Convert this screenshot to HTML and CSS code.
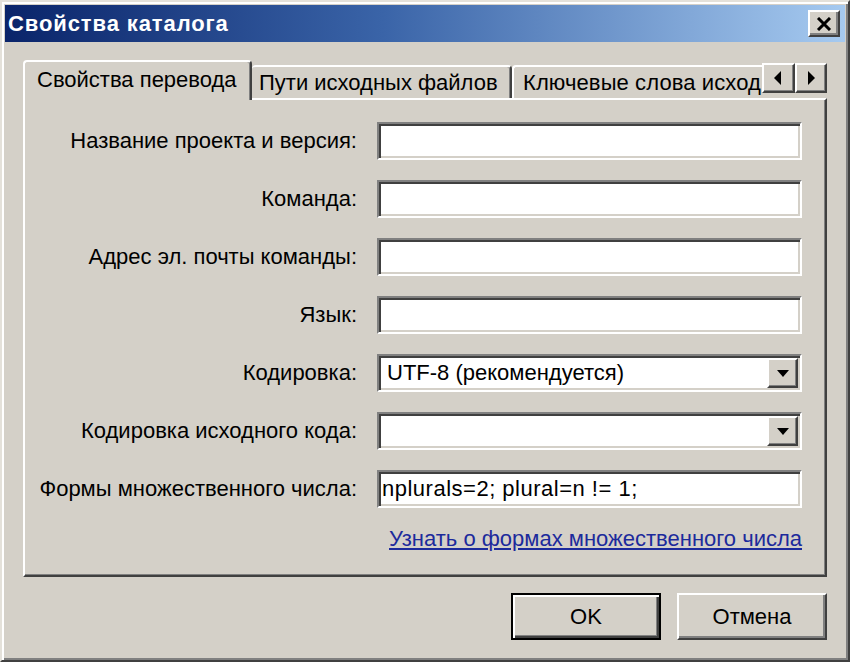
FILE: index.html
```html
<!DOCTYPE html>
<html lang="ru">
<head>
<meta charset="utf-8">
<title>Свойства каталога</title>
<link rel="stylesheet" href="styles.css">
</head>
<body>
<div class="window">
  <div class="titlebar">
    <span class="title">Свойства каталога</span>
    <button class="close-btn" aria-label="Закрыть">
      <svg width="16" height="14" viewBox="0 0 16 14"><path d="M2 1 L14 13 M14 1 L2 13" stroke="#000" stroke-width="3" fill="none"/></svg>
    </button>
  </div>
  <div class="content">
    <div class="tabs">
      <div class="tab tab-active">Свойства перевода</div>
      <div class="tab tab-second">Пути исходных файлов</div>
      <div class="tab tab-third"><span class="tab-clip">Ключевые слова исход</span></div>
      <div class="scroller">
        <button class="scroll-btn" aria-label="Влево"><svg width="8" height="14" viewBox="0 0 8 14"><polygon points="7,0 7,14 0,7" fill="#000"/></svg></button>
        <button class="scroll-btn" aria-label="Вправо"><svg width="8" height="14" viewBox="0 0 8 14"><polygon points="1,0 1,14 8,7" fill="#000"/></svg></button>
      </div>
    </div>
    <div class="panel">
      <div class="form">
        <label class="label">Название проекта и версия:</label>
        <div class="field"></div>
        <label class="label">Команда:</label>
        <div class="field"></div>
        <label class="label">Адрес эл. почты команды:</label>
        <div class="field"></div>
        <label class="label">Язык:</label>
        <div class="field"></div>
        <label class="label">Кодировка:</label>
        <div class="field combo"><span class="combo-text">UTF-8 (рекомендуется)</span><span class="drop-btn"><svg width="12" height="7" viewBox="0 0 12 7"><polygon points="0,0 12,0 6,7" fill="#000"/></svg></span></div>
        <label class="label">Кодировка исходного кода:</label>
        <div class="field combo"><span class="combo-text"></span><span class="drop-btn"><svg width="12" height="7" viewBox="0 0 12 7"><polygon points="0,0 12,0 6,7" fill="#000"/></svg></span></div>
        <label class="label">Формы множественного числа:</label>
        <div class="field text-field">nplurals=2; plural=n != 1;</div>
      </div>
      <div class="link-row"><a class="link" href="#">Узнать о формах множественного числа</a></div>
    </div>
    <div class="buttons">
      <button class="btn btn-default">OK</button>
      <button class="btn">Отмена</button>
    </div>
  </div>
</div>
</body>
</html>
```

FILE: styles.css
```css
html, body {
  margin: 0;
  padding: 0;
  background: #d4d0c8;
}

body {
  font-family: "Liberation Sans", Arial, sans-serif;
  font-size: 22px;
  color: #000;
}

.window {
  width: 850px;
  height: 662px;
  box-sizing: border-box;
  border: 2px solid;
  border-color: #e4e1da #404040 #404040 #e4e1da;
  box-shadow: inset 2px 2px 0 #ffffff, inset -2px -2px 0 #808080;
  padding: 3px;
  display: flex;
  flex-direction: column;
}

.titlebar {
  height: 37px;
  flex: none;
  background: linear-gradient(to right, #0a246a 0%, #3a64a8 45%, #a6caf0 100%);
  display: flex;
  align-items: center;
  justify-content: space-between;
  padding: 0 5px 0 3px;
}

.title {
  color: #fff;
  font-weight: bold;
  font-size: 22px;
  letter-spacing: 0.9px;
}

.close-btn {
  width: 32px;
  height: 27px;
  box-sizing: border-box;
  padding: 0;
  margin: 0;
  background: #d4d0c8;
  border: 2px solid;
  border-color: #ffffff #404040 #404040 #ffffff;
  box-shadow: inset -2px -2px 0 #808080;
  display: flex;
  align-items: center;
  justify-content: center;
}

.content {
  flex: 1;
  display: flex;
  flex-direction: column;
  padding: 18px 18px 0 18px;
}

.tabs {
  height: 38px;
  display: flex;
  align-items: flex-start;
  position: relative;
  z-index: 2;
}

.tab {
  box-sizing: border-box;
  white-space: nowrap;
  overflow: hidden;
  line-height: 24px;
  background: #d4d0c8;
  border-top: 2px solid #ffffff;
  border-left: 2px solid #ffffff;
  border-right: 2px solid #404040;
  border-radius: 4px 4px 0 0;
  box-shadow: inset -1px 0 0 #808080;
}

.tab-active {
  width: 229px;
  height: 40px;
  padding: 6px 0 0 12px;
}

.tab-second {
  width: 260px;
  height: 33px;
  margin-top: 5px;
  padding: 4px 0 0 7px;
  border-left: none;
}

.tab-third {
  flex: 1;
  min-width: 0;
  height: 33px;
  margin-top: 5px;
  padding: 4px 0 0 9px;
  border-right: none;
  border-radius: 4px 0 0 0;
  box-shadow: none;
}

.tab-clip {
  letter-spacing: 0.1px;
}

.scroller {
  width: 65px;
  height: 30px;
  margin-top: 3px;
  display: flex;
  flex: none;
}

.scroll-btn {
  flex: 1;
  height: 30px;
  box-sizing: border-box;
  padding: 0;
  margin: 0;
  background: #d4d0c8;
  border: 2px solid;
  border-color: #ffffff #404040 #404040 #ffffff;
  box-shadow: inset -1px -1px 0 #808080;
  display: flex;
  align-items: center;
  justify-content: center;
}

.panel {
  height: 479px;
  box-sizing: border-box;
  border: 2px solid;
  border-color: #ffffff #404040 #404040 #ffffff;
  box-shadow: inset -1px -1px 0 #808080;
  padding: 22px 23px 0 0;
  position: relative;
  z-index: 1;
}

.form {
  display: grid;
  grid-template-columns: 1fr 425px;
  grid-auto-rows: 38px;
  column-gap: 20px;
  row-gap: 20px;
}

.label {
  display: flex;
  align-items: center;
  justify-content: flex-end;
  white-space: nowrap;
}

.field {
  box-sizing: border-box;
  background: #ffffff;
  border: 2px solid;
  border-color: #808080 #ffffff #ffffff #808080;
  box-shadow: inset 2px 2px 0 #404040, inset -2px -2px 0 #d4d0c8;
  display: flex;
  align-items: center;
}

.text-field {
  padding-left: 3px;
  letter-spacing: 0.5px;
}

.combo {
  justify-content: space-between;
  padding: 2px;
}

.combo-text {
  padding-left: 6px;
  white-space: nowrap;
}

.drop-btn {
  width: 31px;
  height: 30px;
  box-sizing: border-box;
  background: #d4d0c8;
  border: 2px solid;
  border-color: #ffffff #404040 #404040 #ffffff;
  box-shadow: inset -1px -1px 0 #808080;
  display: flex;
  align-items: center;
  justify-content: center;
}

.link-row {
  display: flex;
  justify-content: flex-end;
  margin-top: 18px;
}

.link {
  color: #1c2a9c;
  text-decoration: underline;
}

.buttons {
  display: flex;
  justify-content: flex-end;
  gap: 16px;
  margin-top: 16px;
}

.btn {
  width: 150px;
  height: 47px;
  box-sizing: border-box;
  margin: 0;
  padding: 0;
  font-family: "Liberation Sans", Arial, sans-serif;
  font-size: 22px;
  color: #000;
  background: #d4d0c8;
  border: 2px solid;
  border-color: #ffffff #404040 #404040 #ffffff;
  box-shadow: inset -2px -2px 0 #808080;
}

.btn-default {
  border: 2px solid #000;
  box-shadow: inset 2px 2px 0 #ffffff, inset -2px -2px 0 #404040, inset -3px -3px 0 #808080;
}
```
